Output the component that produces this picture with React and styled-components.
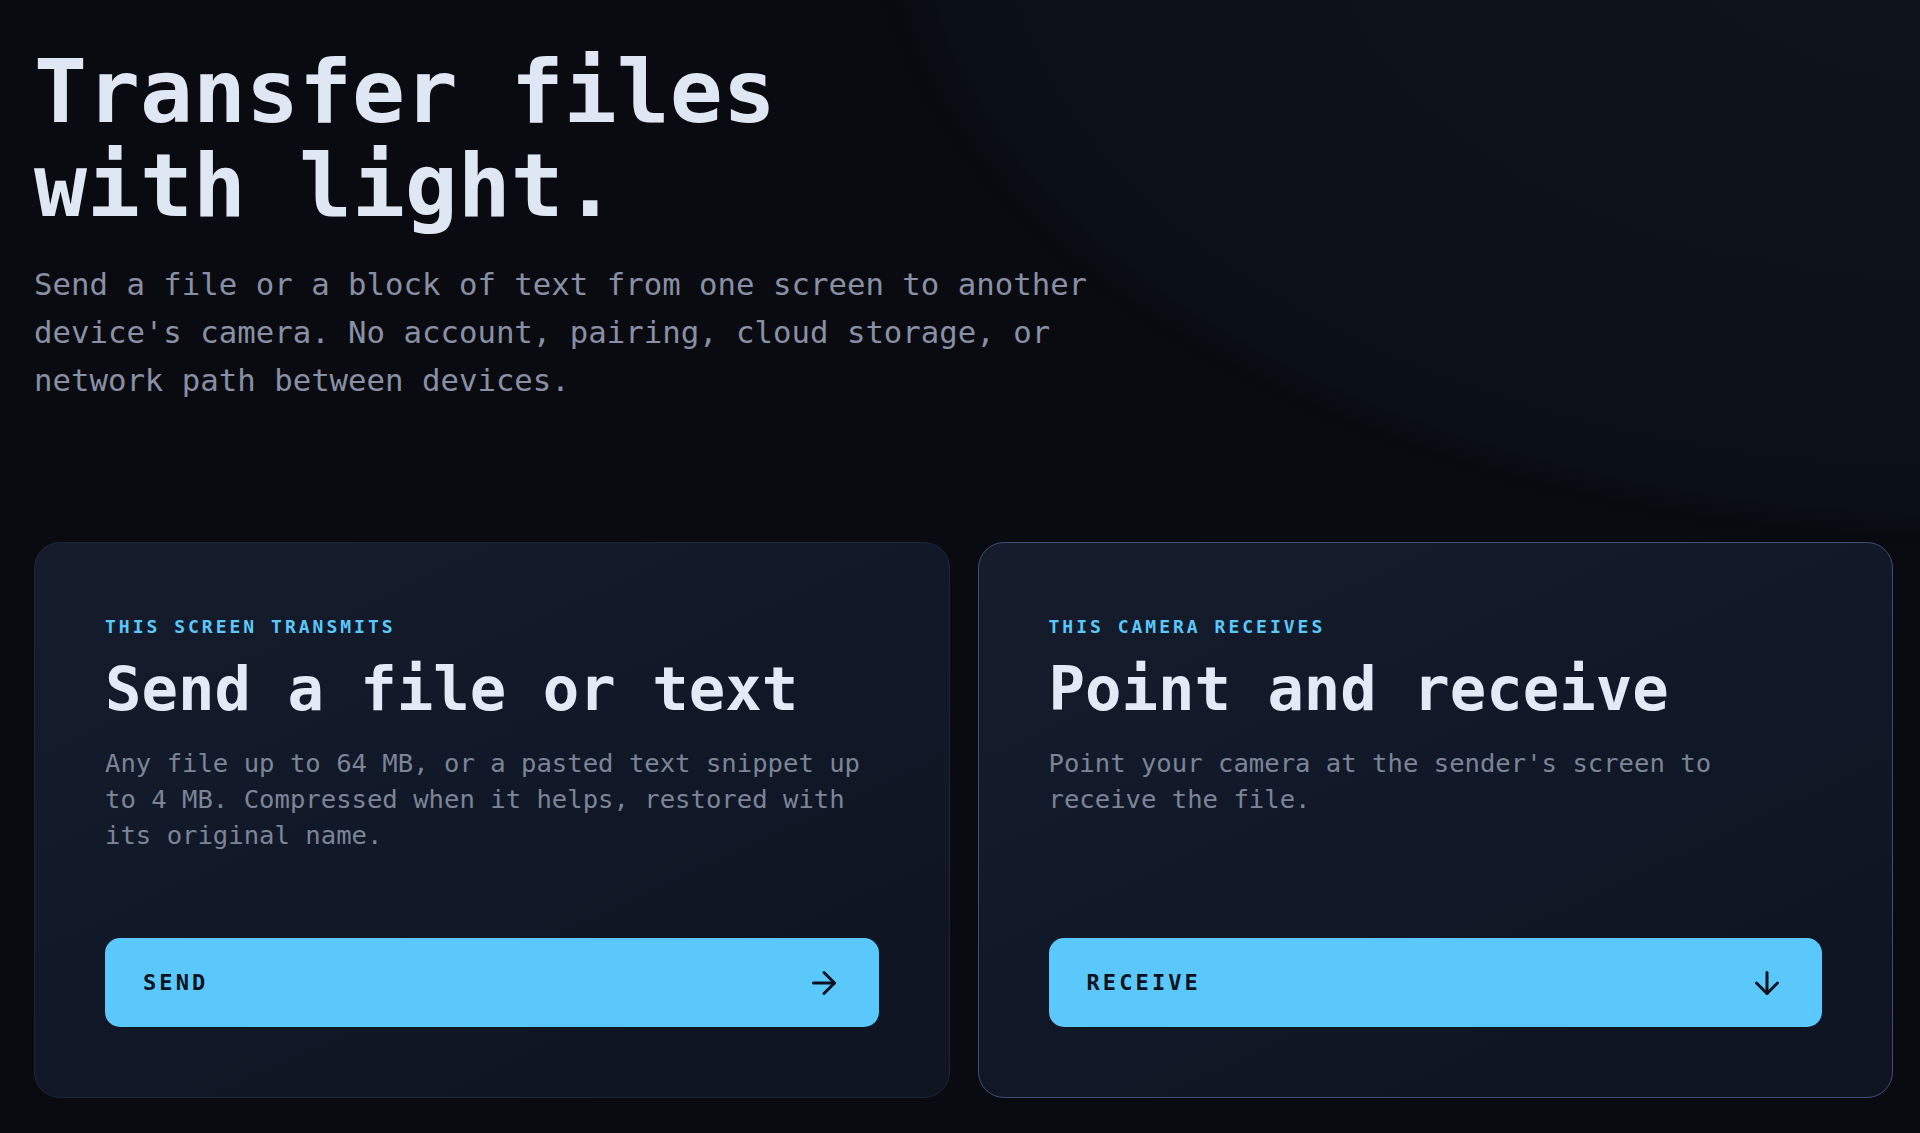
import React from "react";
import styled, { createGlobalStyle } from "styled-components";
import { ArrowRight, ArrowDown } from "lucide-react";

const GlobalStyle = createGlobalStyle`
  html, body {
    margin: 0;
    padding: 0;
    background: #0a0b10;
  }
  * {
    box-sizing: border-box;
  }
`;

const mono = `"DejaVu Sans Mono", "Liberation Mono", monospace`;

const Page = styled.main`
  min-height: 100vh;
  padding: 45px 27px 40px 34px;
  font-family: ${mono};
  background:
    radial-gradient(
      1110px 645px at 1980px -100px,
      #0f131c 0%,
      #0d111a 70%,
      #0b0f16 95%,
      #090a0f 99%,
      rgba(10, 11, 16, 0) 102.5%
    ),
    #0a0b10;
`;

const Headline = styled.h1`
  margin: 0;
  font-family: inherit;
  font-size: 88px;
  line-height: 94px;
  font-weight: 700;
  color: #dfe7f5;
`;

const Lead = styled.p`
  margin: 28px 0 0;
  max-width: 60ch;
  font-size: 30.7px;
  line-height: 48px;
  color: #8890a5;
`;

const Cards = styled.section`
  display: grid;
  grid-template-columns: 1fr 1fr;
  gap: 28px;
  margin-top: 137px;
`;

const Card = styled.article`
  display: flex;
  flex-direction: column;
  padding: 72px 70px 70px;
  border-radius: 26px;
  border: 1px solid ${(p) => (p.$active ? "#3d4d76" : "#1d2537")};
  background: linear-gradient(155deg, #151d2d 0%, #111827 45%, #0e1421 100%);
`;

const Eyebrow = styled.div`
  font-size: 18px;
  line-height: 24px;
  font-weight: 700;
  letter-spacing: 3px;
  text-transform: uppercase;
  color: #5ac8fa;
`;

const CardTitle = styled.h2`
  margin: 17px 0 0;
  font-family: inherit;
  font-size: 60.6px;
  line-height: 67px;
  font-weight: 700;
  color: #e2eaf6;
`;

const CardText = styled.p`
  margin: 22px 0 85px;
  font-size: 25.6px;
  line-height: 36px;
  color: #7c8597;
`;

const ActionButton = styled.button`
  margin-top: auto;
  display: flex;
  align-items: center;
  justify-content: space-between;
  width: 100%;
  height: 89px;
  padding: 0 37px 0 38px;
  border: none;
  border-radius: 15px;
  background: #5ac8fa;
  color: #0b1220;
  font-family: ${mono};
  font-size: 22px;
  font-weight: 700;
  letter-spacing: 3.1px;
  text-transform: uppercase;
  cursor: pointer;

  svg {
    flex-shrink: 0;
  }
`;

const modes = [
  {
    key: "send",
    eyebrow: "This screen transmits",
    title: "Send a file or text",
    text: "Any file up to 64 MB, or a pasted text snippet up to 4 MB. Compressed when it helps, restored with its original name.",
    action: "Send",
    Icon: ArrowRight,
  },
  {
    key: "receive",
    eyebrow: "This camera receives",
    title: "Point and receive",
    text: "Point your camera at the sender's screen to receive the file.",
    action: "Receive",
    Icon: ArrowDown,
    active: true,
  },
];

export default function App() {
  return (
    <>
      <GlobalStyle />
      <Page>
        <Headline>
          Transfer files
          <br />
          with light.
        </Headline>
        <Lead>
          Send a file or a block of text from one screen to another device's
          camera. No account, pairing, cloud storage, or network path between
          devices.
        </Lead>

        <Cards>
          {modes.map(({ key, eyebrow, title, text, action, Icon, active }) => (
            <Card key={key} $active={active}>
              <Eyebrow>{eyebrow}</Eyebrow>
              <CardTitle>{title}</CardTitle>
              <CardText>{text}</CardText>
              <ActionButton type="button">
                <span>{action}</span>
                <Icon size={36} strokeWidth={2} />
              </ActionButton>
            </Card>
          ))}
        </Cards>
      </Page>
    </>
  );
}
